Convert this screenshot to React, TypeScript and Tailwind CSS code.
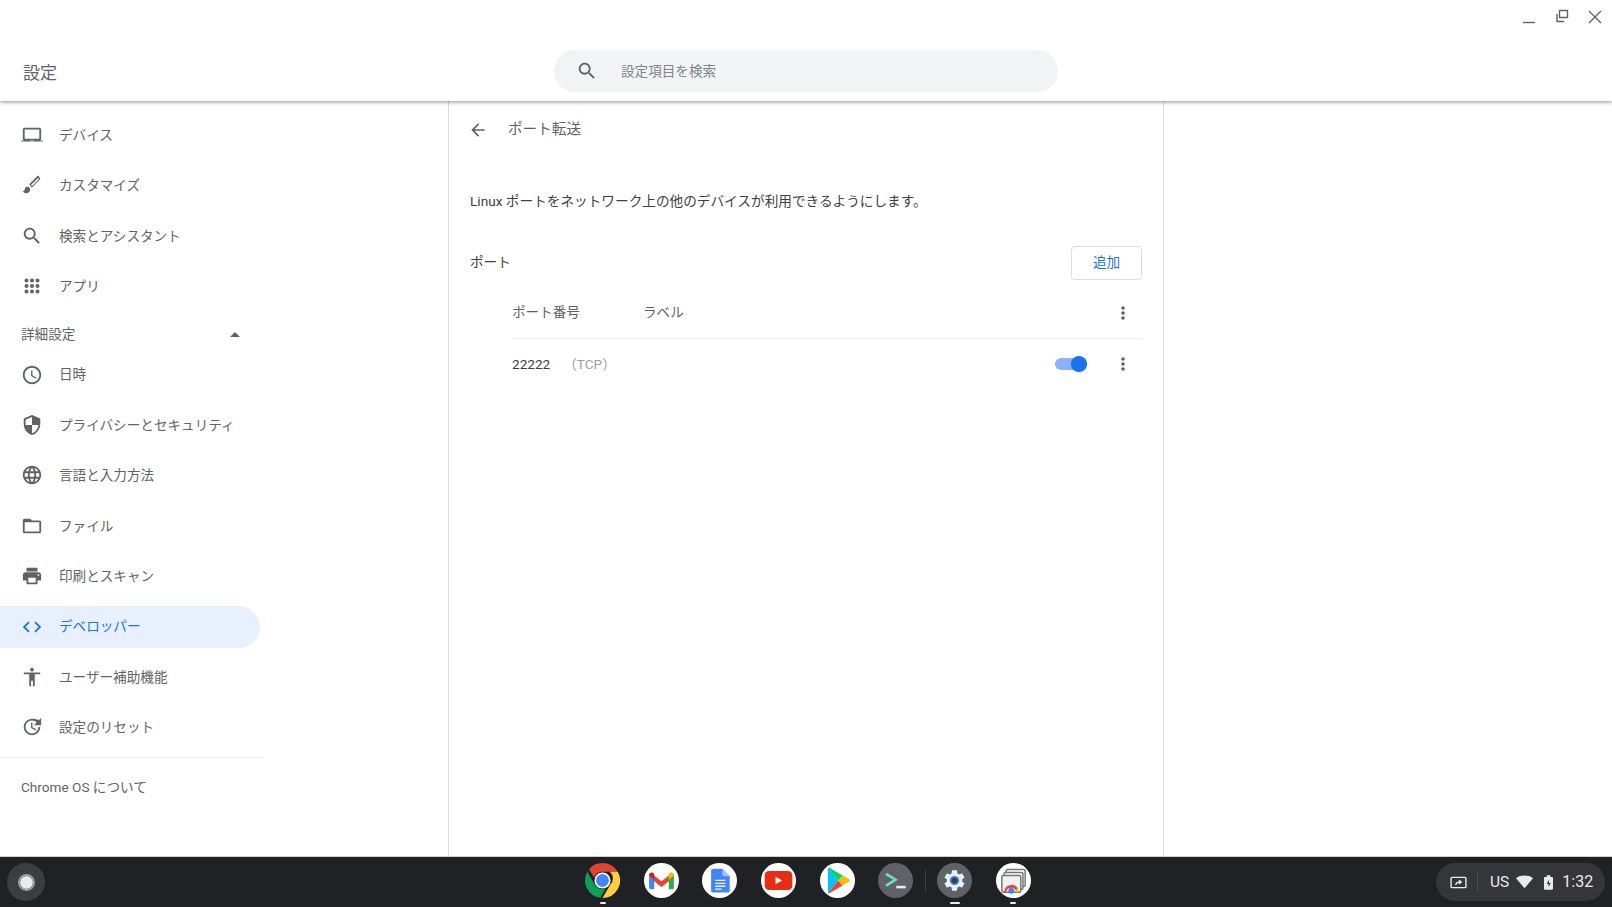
type IconProps = { d: string; className?: string }

function Icon({ d, className = "w-[22px] h-[22px] text-[#5f6368]" }: IconProps) {
    return <svg viewBox="0 0 24 24" fill="currentColor" className={className}><path fillRule="evenodd" d={d} /></svg>
}

const laptop = "M20 18c1.1 0 1.99-.9 1.99-2L22 6c0-1.1-.9-2-2-2H4c-1.1 0-2 .9-2 2v10c0 1.1.9 2 2 2H0c0 1.1.9 1 2 1h20c1.1 0 2 .1 2-1h-4zM4 6h16v10H4V6zm6 12h4v.5h-4V18z"
const brush = "M7 14c-1.66 0-3 1.34-3 3 0 1.31-1.16 2-2 2 .92 1.22 2.49 2 4 2 2.21 0 4-1.79 4-4 0-1.66-1.34-3-3-3zM18.67 2c-.26 0-.51.1-.71.29L9 11.25 11.75 15l8.96-8.96c.39-.39.39-1.02 0-1.41l-1.34-2.34c-.2-.2-.45-.29-.7-.29zm0 2.4l.9 1.2-7.700 7.700-1-1.300z"
const search = "M15.5 14h-.79l-.28-.27C15.41 12.59 16 11.11 16 9.5 16 5.91 13.09 3 9.5 3S3 5.91 3 9.5 5.91 16 9.5 16c1.61 0 3.09-.59 4.23-1.57l.27.28v.79l5 4.99L20.49 19l-4.99-5zm-6 0C7.01 14 5 11.99 5 9.5S7.01 5 9.5 5 14 7.01 14 9.5 11.99 14 9.5 14z"
const apps = [6, 12, 18].flatMap(y => [6, 12, 18].map(x => `M${x - 2.2} ${y}a2.2 2.2 0 1 0 4.4 0a2.2 2.2 0 1 0-4.4 0z`)).join("")
const clock = "M11.99 2C6.47 2 2 6.48 2 12s4.47 10 9.99 10C17.52 22 22 17.52 22 12S17.52 2 11.99 2zM12 20c-4.42 0-8-3.58-8-8s3.58-8 8-8 8 3.58 8 8-3.58 8-8 8zm.5-13H11v6l5.25 3.15.75-1.23-4.5-2.67V7z"
const shield = "M12 1L3 5v6c0 5.55 3.84 10.74 9 12 5.16-1.26 9-6.45 9-12V5l-9-4zm0 10.99h7c-.53 4.12-3.28 7.79-7 8.94V12H5V6.3l7-3.11v8.8z"
const globe = "M11.99 2C6.47 2 2 6.48 2 12s4.47 10 9.99 10C17.52 22 22 17.52 22 12S17.52 2 11.99 2zm6.93 6h-2.95c-.32-1.25-.78-2.45-1.38-3.56 1.84.63 3.37 1.91 4.33 3.56zM12 4.04c.83 1.2 1.48 2.53 1.91 3.96h-3.82c.43-1.43 1.08-2.76 1.91-3.96zM4.26 14C4.1 13.36 4 12.69 4 12s.1-1.36.26-2h3.38c-.08.66-.14 1.32-.14 2 0 .68.06 1.34.14 2H4.26zm.82 2h2.95c.32 1.25.78 2.45 1.38 3.56-1.84-.63-3.37-1.9-4.33-3.56zm2.95-8H5.08c.96-1.66 2.49-2.93 4.33-3.56C8.81 5.55 8.35 6.75 8.03 8zM12 19.96c-.83-1.2-1.48-2.53-1.91-3.96h3.82c-.43 1.43-1.08 2.76-1.91 3.96zM14.34 14H9.66c-.09-.66-.16-1.32-.16-2 0-.68.07-1.35.16-2h4.68c.09.65.16 1.32.16 2 0 .68-.07 1.34-.16 2zm.25 5.56c.6-1.11 1.06-2.31 1.38-3.56h2.95c-.96 1.65-2.49 2.93-4.33 3.56zM16.36 14c.08-.66.14-1.32.14-2 0-.68-.06-1.34-.14-2h3.38c.16.64.26 1.31.26 2s-.1 1.36-.26 2h-3.38z"
const folder = "M20 6h-8l-2-2H4c-1.1 0-1.99.9-1.99 2L2 18c0 1.1.9 2 2 2h16c1.1 0 2-.9 2-2V8c0-1.1-.9-2-2-2zm0 12H4V8h16v10z"
const printer = "M19 8H5c-1.66 0-3 1.34-3 3v6h4v4h12v-4h4v-6c0-1.66-1.34-3-3-3zm-3 11H8v-5h8v5zm3-7c-.55 0-1-.45-1-1s.45-1 1-1 1 .45 1 1-.45 1-1 1zm-1-9H6v4h12V3z"
const code = "M9.4 16.6L4.8 12l4.6-4.6L8 6l-6 6 6 6 1.4-1.4zm5.2 0l4.6-4.6-4.6-4.6L16 6l6 6-6 6-1.4-1.4z"
const access = "M12 2c1.1 0 2 .9 2 2s-.9 2-2 2-2-.9-2-2 .9-2 2-2zm9 7h-6v13h-2v-6h-2v6H9V9H3V7h18v2z"
const reset = "M12 3c-4.97 0-9 4.03-9 9s4.03 9 9 9 9-4.03 9-9h-2c0 3.87-3.13 7-7 7s-7-3.130-7-7 3.130-7 7-7c1.93 0 3.68.79 4.94 2.06L14 10h8V2l-2.65 2.65C17.52 3.61 14.87 3 12 3zm-1 4v6l4.7 2.8.8-1.25-4-2.4V7H11z"
const back = "M20 11H7.83l5.59-5.59L12 4l-8 8 8 8 1.41-1.41L7.83 13H20v-2z"

const topItems = [
    { label: "デバイス", d: laptop },
    { label: "カスタマイズ", d: brush },
    { label: "検索とアシスタント", d: search },
    { label: "アプリ", d: apps },
]

const advancedItems = [
    { label: "日時", d: clock },
    { label: "プライバシーとセキュリティ", d: shield },
    { label: "言語と入力方法", d: globe },
    { label: "ファイル", d: folder },
    { label: "印刷とスキャン", d: printer },
    { label: "デベロッパー", d: code, active: true },
    { label: "ユーザー補助機能", d: access },
    { label: "設定のリセット", d: reset },
]

function NavItem({ label, d, active }: { label: string; d: string; active?: boolean }) {
    return <div className={`flex items-center h-[42px] w-[260px] pl-[21px] rounded-r-full ${active ? "bg-[#e8f0fe] text-[#1a73e8]" : "text-[#5f6368]"}`}>
        <Icon d={d} className={`w-[22px] h-[22px] ${active ? "text-[#1a73e8]" : "text-[#5f6368]"}`} />
        <span className="ml-[16px] text-[13.6px]">{label}</span>
    </div>
}

function Kebab() {
    return <svg viewBox="0 0 4 16" className="w-[4px] h-[16px] text-[#5f6368]" fill="currentColor">
        <circle cx="2" cy="3" r="1.8" />
        <circle cx="2" cy="8" r="1.8" />
        <circle cx="2" cy="13" r="1.8" />
    </svg>
}

function Sidebar() {
    return <aside className="w-[449px] shrink-0 border-r border-[#dadce0] pt-[13px]">
        <div className="flex flex-col gap-[8.4px]">
            {topItems.map(item => <NavItem key={item.label} {...item} />)}
        </div>
        <div className="flex items-center justify-between w-[240px] h-[26px] mt-[14px] mb-[6.5px] pl-[21px] text-[13.6px] text-[#5f6368]">
            <span>詳細設定</span>
            <svg viewBox="0 0 10 5" className="w-[10px] h-[5px] text-[#5f6368]" fill="currentColor"><path d="M5 0l5 5H0z" /></svg>
        </div>
        <div className="flex flex-col gap-[8.4px]">
            {advancedItems.map(item => <NavItem key={item.label} {...item} />)}
        </div>
        <div className="w-[263px] border-t border-[#eeeff1] mt-[9px]" />
        <div className="pl-[21px] mt-[19px] text-[13.6px] text-[#5f6368]">Chrome OS について</div>
    </aside>
}

function PortPanel() {
    return <main className="w-[715px] shrink-0 border-r border-[#dadce0] pl-[21px] pr-[21px]">
        <div className="flex items-center h-[58px]">
            <Icon d={back} className="w-[20px] h-[20px] -ml-[2px] text-[#5f6368]" />
            <h2 className="ml-[20px] text-[14.6px] text-[#5f6368]">ポート転送</h2>
        </div>
        <p className="mt-[30px] text-[13.65px] leading-[24px] text-[#3c4043]">Linux ポートをネットワーク上の他のデバイスが利用できるようにします。</p>
        <div className="flex items-center justify-between mt-[33px] h-[34px]">
            <span className="text-[13.6px] text-[#3c4043] mb-[2px]">ポート</span>
            <button className="w-[71px] h-[34px] pb-[2px] rounded border border-[#dadce0] text-[13.6px] text-[#1a73e8]">追加</button>
        </div>
        <div className="ml-[42px]">
            <div className="flex items-center h-[59px] pt-[8px] border-b border-[#eeeff1] text-[13.6px] text-[#5f6368]">
                <span className="w-[131px] mb-[1px]">ポート番号</span>
                <span className="mb-[1px]">ラベル</span>
                <span className="ml-auto mr-[17px]"><Kebab /></span>
            </div>
            <div className="flex items-center h-[50px] text-[13.6px]">
                <span className="text-[#3c4043]">22222</span>
                <span className="ml-[13px] text-[#9aa0a6]">（TCP）</span>
                <div className="ml-auto relative w-[32px] h-[12px] rounded-full bg-[#8ab4f8]">
                    <div className="absolute right-0 top-[-2px] w-[16px] h-[16px] rounded-full bg-[#1a73e8] shadow" />
                </div>
                <span className="ml-[34px] mr-[17px]"><Kebab /></span>
            </div>
        </div>
    </main>
}

function Chrome() {
    return <svg viewBox="0 0 48 48" className="w-[35px] h-[35px]">
        <path fill="#db4437" d="M24 0a24 24 0 0 1 20.8 12H24a12 12 0 0 0-11.4 8.2L5.5 8.4A24 24 0 0 1 24 0z" />
        <path fill="#0f9d58" d="M3.2 12L13.6 30a12 12 0 0 0 14.6 5.2L21 47.8A24 24 0 0 1 3.2 12z" />
        <path fill="#ffcd40" d="M44.8 12A24 24 0 0 1 24 48l10.4-18a12 12 0 0 0-.4-18z" />
        <circle cx="24" cy="24" r="11" fill="#fff" />
        <circle cx="24" cy="24" r="8.8" fill="#4285f4" />
    </svg>
}

function Gmail() {
    return <svg viewBox="0 0 48 48" className="w-[35px] h-[35px]">
        <circle cx="24" cy="24" r="24" fill="#fff" />
        <path fill="#ea4335" d="M10 14l14 11 14-11v8L24 33 10 22z" />
        <path fill="#4285f4" d="M7 17c0-3 2-4 4-4l3 2v21H9c-1 0-2-1-2-2z" />
        <path fill="#34a853" d="M41 17c0-3-2-4-4-4l-3 2v21h5c1 0 2-1 2-2z" />
        <path fill="#fbbc04" d="M34 15l3-2c2 0 4 1 4 4l-7 6z" />
        <path fill="#c5221f" d="M14 15l-3-2c-2 0-4 1-4 4l7 6z" />
    </svg>
}

function Docs() {
    return <svg viewBox="0 0 48 48" className="w-[35px] h-[35px]">
        <circle cx="24" cy="24" r="24" fill="#fff" />
        <path fill="#4285f4" d="M16 8h12l10 10v20c0 1.5-1 2.5-2.500 2.500H15c-1.500 0-2.500-1-2.500-2.500V10.500C12.500 9 14 8 16 8z" />
        <path fill="#a1c2fa" d="M28 8l10 10H30c-1 0-2-1-2-2z" />
        <path fill="#f1f1f1" d="M18 23h14v1.800H18zM18 27h14v1.800H18zM18 31h14v1.800H18zM18 35h9v1.800h-9z" />
    </svg>
}

function Youtube() {
    return <svg viewBox="0 0 48 48" className="w-[35px] h-[35px]">
        <circle cx="24" cy="24" r="24" fill="#fff" />
        <rect x="5" y="11" width="38" height="26" rx="6" fill="#e62e12" />
        <path fill="#fff" d="M20 19l9 5-9 5z" />
    </svg>
}

function Play() {
    return <svg viewBox="0 0 48 48" className="w-[35px] h-[35px]">
        <circle cx="24" cy="24" r="24" fill="#fff" />
        <path fill="#00c3ff" d="M11 7l14 17-14 17z" />
        <path fill="#00d95f" d="M11 7c1-.5 2-.5 3 .1l17 10-6 7z" />
        <path fill="#ea4335" d="M11 41c1 .5 2 .5 3-.1l17-10-6-7z" />
        <path fill="#fbbc04" d="M31 17l9 5.200c1.500 1 1.500 2.600 0 3.600l-9 5.200-6-7z" />
    </svg>
}

function Terminal() {
    return <svg viewBox="0 0 48 48" className="w-[35px] h-[35px]">
        <circle cx="24" cy="24" r="24" fill="#5f6368" />
        <path fill="none" stroke="#6fe3c1" strokeWidth="3.500" d="M11 15l13 8-13 8" />
        <path fill="none" stroke="#e8eaed" strokeWidth="3.500" d="M25 33h13" />
    </svg>
}

function Gear() {
    return <svg viewBox="0 0 48 48" className="w-[35px] h-[35px]">
        <circle cx="24" cy="24" r="24" fill="#5f6368" />
        <g transform="translate(7.200 7.200) scale(1.400)">
            <path fill="#e8f0fe" d="M19.430 12.980c.04-.32.07-.64.07-.98s-.03-.66-.07-.98l2.110-1.650c.19-.15.24-.42.12-.64l-2-3.460c-.12-.22-.39-.3-.61-.22l-2.490 1c-.52-.4-1.080-.73-1.690-.98l-.38-2.650C14.460 2.180 14.250 2 14 2h-4c-.25 0-.46.18-.49.42l-.38 2.650c-.61.25-1.170.59-1.690.98l-2.490-1c-.23-.09-.49 0-.61.22l-2 3.460c-.13.22-.07.49.12.64l2.110 1.650c-.04.32-.07.65-.07.98s.03.66.07.98l-2.110 1.650c-.19.15-.24.42-.12.64l2 3.460c.12.22.39.3.61.22l2.490-1c.52.4 1.080.73 1.690.98l.38 2.650c.03.24.24.42.49.42h4c.25 0 .46-.18.49-.42l.38-2.650c.61-.25 1.170-.59 1.690-.98l2.490 1c.23.09.49 0 .61-.22l2-3.460c.12-.22.07-.49-.12-.64l-2.110-1.650z" />
            <circle cx="12" cy="12" r="4.500" fill="#3b78e7" />
            <circle cx="12" cy="12" r="2.800" fill="#3c4043" />
        </g>
    </svg>
}

function Screens() {
    return <svg viewBox="0 0 48 48" className="w-[35px] h-[35px]">
        <circle cx="24" cy="24" r="24" fill="#fff" />
        <rect x="14" y="9" width="26" height="23" rx="2" fill="#fff" stroke="#757575" strokeWidth="2" />
        <rect x="11" y="13" width="26" height="23" rx="2" fill="#fff" stroke="#757575" strokeWidth="2" />
        <rect x="8" y="17" width="26" height="23" rx="2" fill="#f1f1f1" stroke="#757575" strokeWidth="2" />
        <path fill="#ea4335" d="M11 40a10 10 0 0 1 10-10 10 10 0 0 1 9 5l-3 2a7 7 0 0 0-6-3 7 7 0 0 0-7 6z" />
        <path fill="#fbbc04" d="M30 35a10 10 0 0 1 1 5h-4a6 6 0 0 0-.500-3z" />
        <circle cx="21" cy="38" r="4" fill="#4285f4" />
    </svg>
}

function ShelfIcon({ children, running }: { children: React.ReactNode; running?: string }) {
    return <div className="relative w-[35px] h-[35px]">
        {children}
        {running && <div className={`absolute left-1/2 -translate-x-1/2 -bottom-[6px] h-[2px] rounded-full bg-[#e8eaed] ${running}`} />}
    </div>
}

function Shelf() {
    return <footer className="flex items-center h-[51px] shrink-0 bg-[#202124] border-t border-[#d0d0d0]">
        <div className="ml-[7px] flex items-center justify-center w-[38px] h-[38px] rounded-full bg-[#3c3d40]">
            <div className="w-[13px] h-[13px] rounded-full bg-[#e8eaed] outline-2 outline-[#9aa0a6]" />
        </div>
        <div className="ml-[540px] mb-[3px] flex items-center gap-[23.7px]">
            <ShelfIcon running="w-[6px]"><Chrome /></ShelfIcon>
            <ShelfIcon><Gmail /></ShelfIcon>
            <ShelfIcon><Docs /></ShelfIcon>
            <ShelfIcon><Youtube /></ShelfIcon>
            <ShelfIcon><Play /></ShelfIcon>
            <ShelfIcon><Terminal /></ShelfIcon>
            <div className="w-px h-[22px] mx-[-12.35px] bg-[#3c4043]" />
            <ShelfIcon running="w-[10px]"><Gear /></ShelfIcon>
            <ShelfIcon running="w-[6px]"><Screens /></ShelfIcon>
        </div>
        <div className="ml-auto mr-[7px] flex items-center h-[38px] w-[169px] rounded-full bg-[#35363a] text-[#e8eaed] pl-[14px]">
            <svg viewBox="0 0 18 14" className="w-[17px] h-[13px]" fill="none" stroke="#e8eaed" strokeWidth="1.500">
                <rect x="1" y="1.500" width="16" height="11" rx="1" />
                <path d="M6 9.500c.5-2 2-3 5-3M9.500 4.500l2.500 2-2.500 2" />
            </svg>
            <div className="ml-[10px] w-px h-[20px] bg-[#4a4b4f]" />
            <span className="ml-[12px] pt-[2px] text-[15.5px]">US</span>
            <svg viewBox="0 0 24 24" className="ml-[7px] w-[17px] h-[17px]" fill="#e8eaed"><path d="M12 20L0 6c3-3 7.500-4 12-4s9 1 12 4z" /></svg>
            <svg viewBox="0 0 10 16" className="ml-[11px] w-[9px] h-[15px]">
                <path fill="#e8eaed" d="M3 0h4v2h2c.5 0 1 .5 1 1v12c0 .5-.5 1-1 1H1c-.5 0-1-.5-1-1V3c0-.5.5-1 1-1h2z" />
                <path fill="#35363a" d="M5.500 5L3 9.500h2V13l2.500-4.500h-2z" />
            </svg>
            <span className="ml-[9px] text-[16px]">1:32</span>
        </div>
    </footer>
}

export default function App() {
    return <div className="flex flex-col w-[1612px] h-[907px] overflow-hidden bg-white" style={{ fontFamily: 'Roboto, "Noto Sans CJK JP", sans-serif' }}>
        <header className="relative z-10 h-[101px] shrink-0 bg-white shadow-[0_1px_4px_rgba(0,0,0,0.45)]">
            <div className="flex justify-end items-center h-[34px] mb-[17px] gap-[17px] pr-[9px] text-[#5f6368]">
                <svg viewBox="0 0 16 16" className="w-[16px] h-[16px]" fill="none" stroke="currentColor" strokeWidth="1.400"><path d="M2 13.500h12" /></svg>
                <svg viewBox="0 0 16 16" className="w-[16px] h-[16px]" fill="none" stroke="currentColor" strokeWidth="1.400"><path d="M5.500 1.500h8v7h-8zM3 5v7.500h7" /></svg>
                <svg viewBox="0 0 16 16" className="w-[16px] h-[16px]" fill="none" stroke="currentColor" strokeWidth="1.400"><path d="M2 2l12 12M14 2L2 14" /></svg>
            </div>
            <div className="flex items-center">
                <h1 className="w-[554px] pl-[23px] pt-[4px] text-[17px] text-[#5f6368]">設定</h1>
                <div className="flex items-center w-[504px] h-[42px] mt-[-1px] rounded-full bg-[#f1f3f4]">
                    <Icon d={search} className="ml-[22px] w-[22px] h-[22px] text-[#5f6368]" />
                    <span className="ml-[23px] text-[13.6px] text-[#80868b]">設定項目を検索</span>
                </div>
            </div>
        </header>
        <div className="flex flex-1 min-h-0">
            <Sidebar />
            <PortPanel />
        </div>
        <Shelf />
    </div>
}
